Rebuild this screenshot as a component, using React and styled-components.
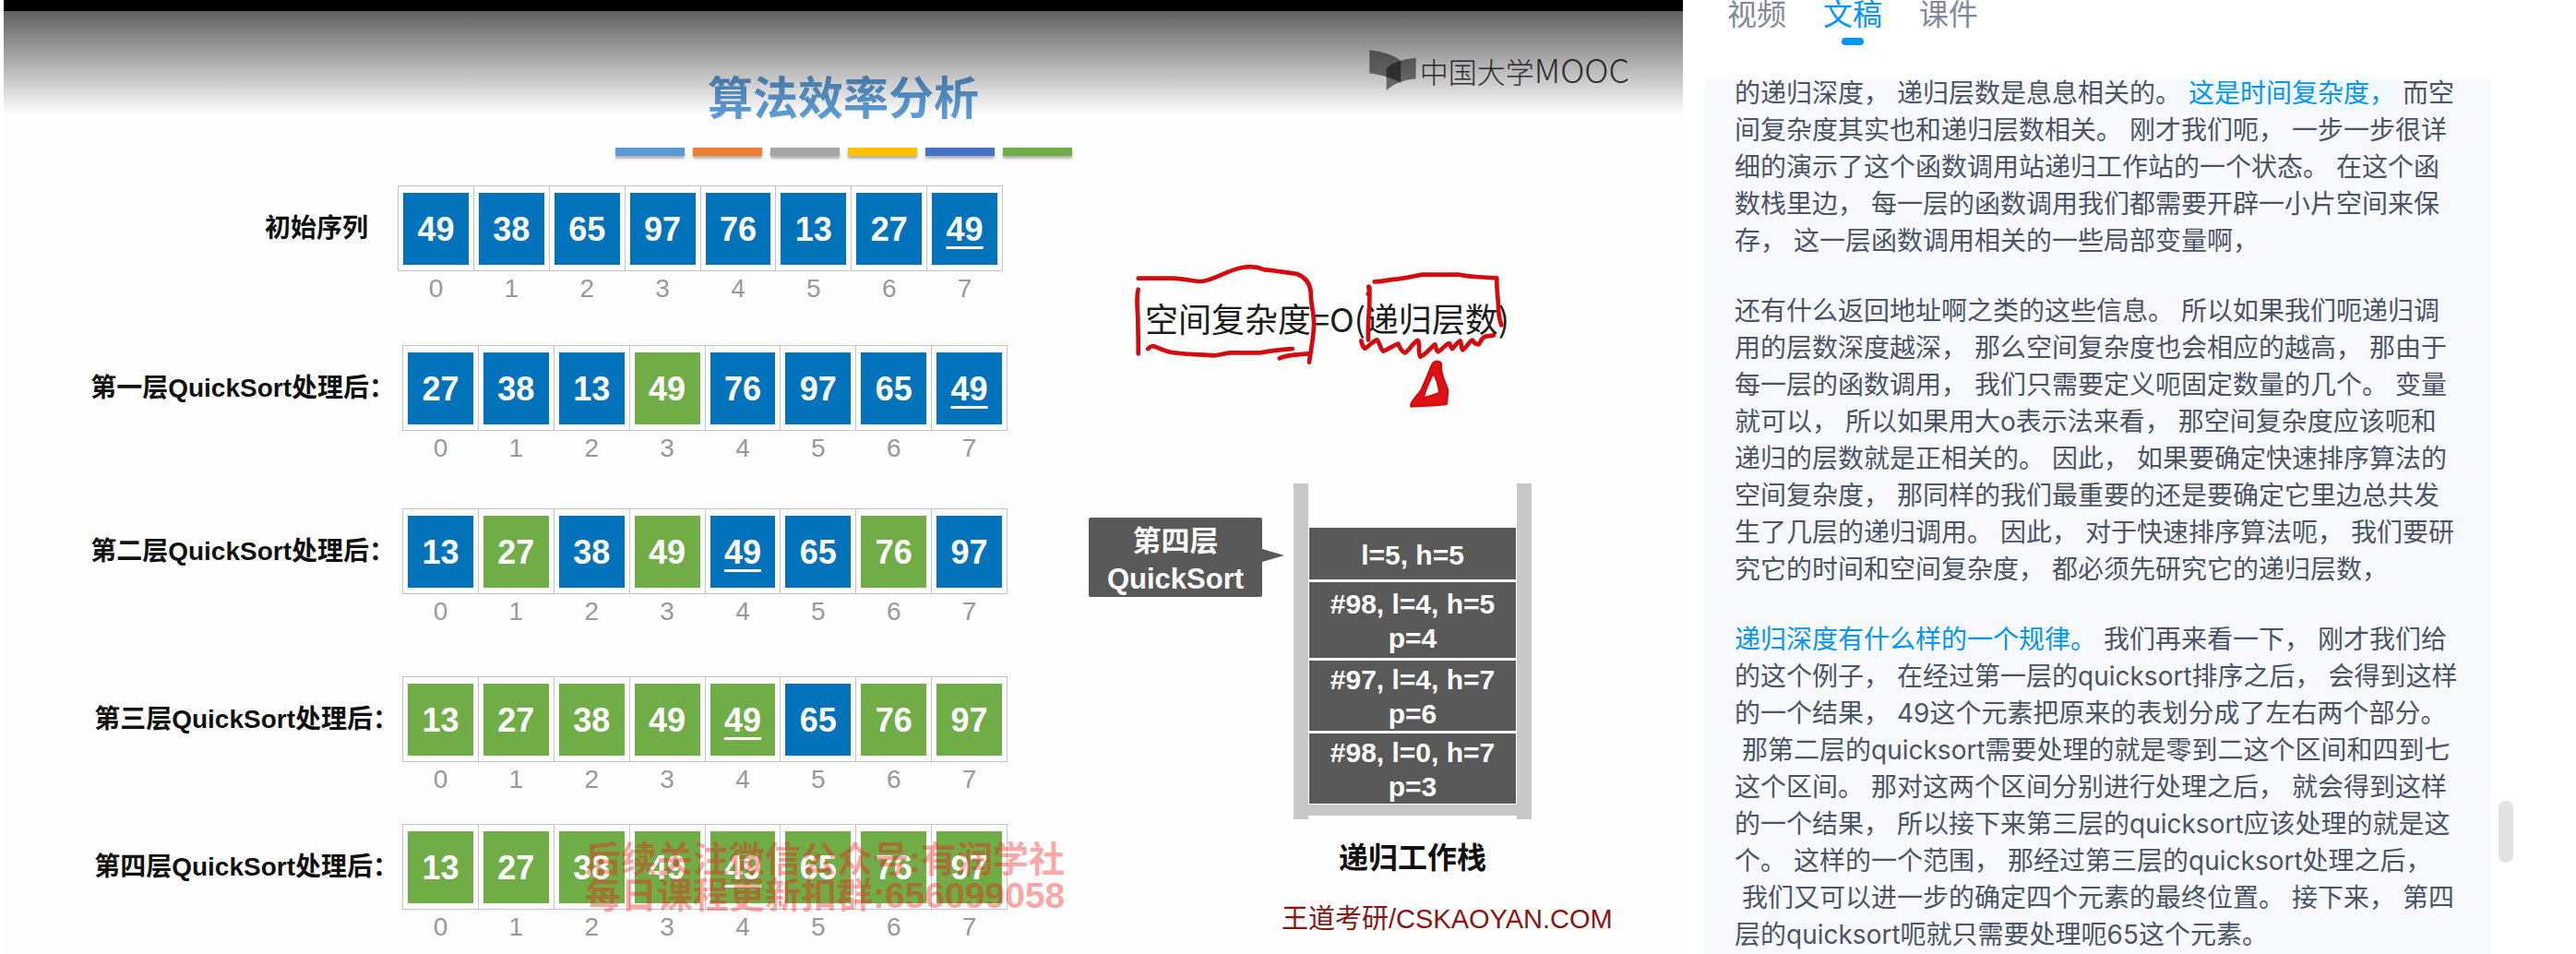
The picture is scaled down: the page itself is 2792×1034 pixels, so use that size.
import React from "react";
import styled, { createGlobalStyle } from "styled-components";

const cjk = '"Noto Sans CJK SC", sans-serif';
const slideFont = `"Liberation Sans", ${cjk}`;

const GlobalStyle = createGlobalStyle`
  *, *::before, *::after { box-sizing: border-box; }
  body { margin: 0; background: #fff; }
`;

const Page = styled.main`
  display: grid;
  grid-template-columns: 1820fr 968fr;
  height: 100vh;
  padding-left: 4px;
  overflow: hidden;
  font-family: ${slideFont};
`;

/* ---------- video slide ---------- */

const Slide = styled.section`
  position: relative;
  border-top: 12px solid #000;
  background: #fefefe;
  overflow: hidden;
`;

const Shade = styled.div`
  position: absolute;
  inset: 0 0 auto;
  height: 113px;
  background: linear-gradient(rgba(0, 0, 0, 0.62), rgba(0, 0, 0, 0));
  pointer-events: none;
`;

const SlideHeader = styled.header`
  display: grid;
  grid-template-columns: 1fr auto 1fr;
  height: 148px;
  padding: 42px 58px 0;
`;

const Title = styled.h1`
  grid-column: 2;
  margin: 14px 0 0;
  font: 700 49px/70px ${cjk};
  color: #5b9bd5;
`;

const Brand = styled.div`
  display: flex;
  align-items: flex-start;
  justify-content: flex-end;
  gap: 4px;
  font: 300 31px/40px ${cjk};
  color: #3c3c3c;
`;

const BrandLatin = styled.span`
  font-size: 36px;
`;

const Stripes = styled.div`
  display: flex;
  justify-content: center;
  gap: 9px;
`;

const Stripe = styled.i`
  width: 75px;
  height: 9px;
  background: ${(p) => p.$color};
  box-shadow: 0 3px 3px rgba(0, 0, 0, 0.3);
`;

const SlideBody = styled.div`
  display: flex;
  padding-top: 32px;
`;

const Steps = styled.div`
  flex: none;
  width: 1160px;
`;

const Step = styled.div`
  display: flex;
  margin-bottom: ${(p) => p.$after}px;
`;

const StepLabel = styled.div`
  width: ${(p) => (p.$first ? 427 : 432)}px;
  padding-right: ${(p) => p.$inset}px;
  text-align: right;
  font-size: 28px;
  line-height: 94px;
  font-weight: 700;
  color: #111;
`;

const ArrayTable = styled.table`
  table-layout: fixed;
  width: 656px;
  border-collapse: collapse;
`;

const Cell = styled.td`
  height: 92px;
  padding: 0 5px;
  border: 1px solid #c4c4c8;
`;

const Block = styled.span`
  display: block;
  height: 78px;
  background: ${(p) => (p.$done ? "#70ad47" : "#0272bb")};
  color: #fff;
  font-size: 36px;
  line-height: 80px;
  font-weight: 700;
  text-align: center;
  text-decoration: ${(p) => (p.$marked ? "underline 3px" : "none")};
  text-underline-offset: 6px;
`;

const Index = styled.td`
  height: 35px;
  padding: 3px 0 0;
  font-size: 28px;
  line-height: 32px;
  text-align: center;
  color: #999;
`;

const Notes = styled.div`
  flex: 1;
  min-width: 0;
`;

const Formula = styled.div`
  position: relative;
  width: 480px;
  height: 200px;
  margin: 59px 0 0 36px;
  padding: 58px 0 0 41px;
  font: 400 36px/52px ${cjk};
  color: #1c1c1c;
  white-space: nowrap;
`;

const Ink = styled.svg`
  position: absolute;
  inset: 0;
  width: 100%;
  height: 100%;
  fill: none;
  stroke: #d40a0c;
  stroke-width: 14;
  stroke-linecap: round;
  stroke-linejoin: round;
`;

const StackArea = styled.div`
  display: flex;
  gap: 34px;
  margin: 64px 0 0 16px;
`;

const Callout = styled.div`
  position: relative;
  width: 188px;
  height: 86px;
  margin-top: 37px;
  padding-top: 5px;
  border-radius: 2px;
  background: #595959;
  color: #fff;
  font-size: 31px;
  line-height: 41px;
  font-weight: 700;
  text-align: center;

  &::after {
    content: "";
    position: absolute;
    left: 100%;
    top: 34px;
    border: solid transparent;
    border-width: 7px 0 7px 24px;
    border-left-color: #595959;
  }
`;

const StackColumn = styled.div`
  display: flex;
  flex-direction: column;
  align-items: center;
`;

const Stack = styled.div`
  display: flex;
  flex-direction: column;
  gap: 3px;
  width: 258px;
  height: 364px;
  padding: 48px 1px 4px;
  border: solid #c8c8c8;
  border-width: 0 16px;
`;

const Frame = styled.div`
  display: flex;
  align-items: center;
  justify-content: center;
  flex: ${(p) => p.$size} 1 0;
  padding-top: 2px;
  background: #595959;
  color: #fff;
  font-size: 30px;
  line-height: 37px;
  font-weight: 700;
  text-align: center;
  white-space: pre-line;
`;

const StackFloor = styled.div`
  height: 12px;
  margin: -2px -1px 0;
  background: #c8c8c8;
`;

const StackName = styled.div`
  margin-top: 15px;
  font: 700 32px/48px ${cjk};
  color: #111;
`;

const Credit = styled.div`
  margin: 24px 0 0 225px;
  font: 400 29px/42px ${slideFont};
  color: #8c1410;
`;

const Watermark = styled.p`
  position: absolute;
  left: 630px;
  top: 900px;
  margin: 0;
  font-size: 39px;
  line-height: 39px;
  font-weight: 700;
  color: rgba(250, 20, 20, 0.38);
  white-space: nowrap;
`;

/* ---------- transcript ---------- */

const Side = styled.aside`
  display: flex;
  flex-direction: column;
  min-height: 0;
  padding: 0 68px 0 24px;
  font-family: Inter, ${cjk};
`;

const Tabs = styled.nav`
  display: flex;
  flex: none;
  gap: 40px;
  height: 86px;
  padding-left: 24px;
`;

const Tab = styled.button`
  display: flex;
  flex-direction: column;
  align-items: center;
  padding: 0;
  border: 0;
  background: none;
  font: 400 32px/26px ${cjk};
  color: ${(p) => (p.$active ? "#0095ff" : "#808998")};

  &::after {
    content: "";
    width: 24px;
    height: 8px;
    margin-top: 15px;
    border-radius: 4px;
    background: ${(p) => (p.$active ? "#0095ff" : "transparent")};
  }
`;

const Scroller = styled.div`
  display: flex;
  flex: 1;
  gap: 8px;
  min-height: 0;
`;

const Transcript = styled.article`
  flex: 1;
  padding: 0 32px;
  background: #f8f9fd;
  overflow: hidden;
`;

const Scrolled = styled.div`
  margin-top: -5px;
`;

const Paragraph = styled.p`
  margin: 0 0 36px;
  font-size: 28px;
  line-height: 40px;
  color: #4a5468;
`;

const Clause = styled.span`
  padding: ${(p) => (p.$tone === "current" ? 3 : 0)}px 0;
  padding-left: 8px;
  color: ${(p) => (p.$tone ? "#0095ff" : "inherit")};
  background: ${(p) => (p.$tone === "current" ? "#f2faff" : "none")};

  &:first-child {
    padding-left: 0;
  }
`;

const Track = styled.div`
  display: flex;
  flex-direction: column;
  justify-content: flex-end;
  width: 16px;
  padding-bottom: 99px;
`;

const Thumb = styled.div`
  height: 67px;
  border-radius: 8px;
  background: #e2e2e2;
`;

/* ---------- data ---------- */

const stripes = ["#5b9bd5", "#ed7d31", "#a5a5a5", "#ffc000", "#4472c4", "#70ad47"];

const steps = [
  { label: "初始序列", inset: 32, after: 45, values: [49, 38, 65, 97, 76, 13, 27, 49], done: [], marked: 7 },
  { label: "第一层QuickSort处理后：", inset: 8, after: 49, values: [27, 38, 13, 49, 76, 97, 65, 49], done: [3], marked: 7 },
  { label: "第二层QuickSort处理后：", inset: 8, after: 54, values: [13, 27, 38, 49, 49, 65, 76, 97], done: [1, 3, 6], marked: 4 },
  { label: "第三层QuickSort处理后：", inset: 4, after: 32, values: [13, 27, 38, 49, 49, 65, 76, 97], done: [0, 1, 2, 3, 4, 6, 7], marked: 4 },
  { label: "第四层QuickSort处理后：", inset: 4, after: 0, values: [13, 27, 38, 49, 49, 65, 76, 97], done: [0, 1, 2, 3, 4, 5, 6, 7], marked: 4 },
];

const frames = [
  { text: "l=5, h=5", size: 56 },
  { text: "#98, l=4, h=5\np=4", size: 82 },
  { text: "#97, l=4, h=7\np=6", size: 76 },
  { text: "#98, l=0, h=7\np=3", size: 75 },
];

const tabs = ["视频", "文稿", "课件"];

const paragraphs = [
  [
    "的递归深度，",
    "递归层数是息息相关的。",
    { text: "这是时间复杂度，", tone: "current" },
    "而空间复杂度其实也和递归层数相关。",
    "刚才我们呃，",
    "一步一步很详细的演示了这个函数调用站递归工作站的一个状态。",
    "在这个函数栈里边，",
    "每一层的函数调用我们都需要开辟一小片空间来保存，",
    "这一层函数调用相关的一些局部变量啊，",
  ],
  [
    "还有什么返回地址啊之类的这些信息。",
    "所以如果我们呃递归调用的层数深度越深，",
    "那么空间复杂度也会相应的越高，",
    "那由于每一层的函数调用，",
    "我们只需要定义呃固定数量的几个。",
    "变量就可以，",
    "所以如果用大o表示法来看，",
    "那空间复杂度应该呃和递归的层数就是正相关的。",
    "因此，",
    "如果要确定快速排序算法的空间复杂度，",
    "那同样的我们最重要的还是要确定它里边总共发生了几层的递归调用。",
    "因此，",
    "对于快速排序算法呃，",
    "我们要研究它的时间和空间复杂度，",
    "都必须先研究它的递归层数，",
  ],
  [
    { text: "递归深度有什么样的一个规律。", tone: "marked" },
    "我们再来看一下，",
    "刚才我们给的这个例子，",
    "在经过第一层的quicksort排序之后，",
    "会得到这样的一个结果，",
    "49这个元素把原来的表划分成了左右两个部分。",
    "那第二层的quicksort需要处理的就是零到二这个区间和四到七这个区间。",
    "那对这两个区间分别进行处理之后，",
    "就会得到这样的一个结果，",
    "所以接下来第三层的quicksort应该处理的就是这个。",
    "这样的一个范围，",
    "那经过第三层的quicksort处理之后，",
    "我们又可以进一步的确定四个元素的最终位置。",
    "接下来，",
    "第四层的quicksort呃就只需要处理呃65这个元素。",
  ],
];

function BrandMark() {
  return (
    <svg width="51" height="44" viewBox="0 0 153 132" aria-hidden="true">
      <path d="M1 1 C45 6 78 16 103 36 V108 C75 92 40 82 1 76 Z" fill="#000" fillOpacity="0.5" />
      <path d="M56 132 V60 C78 42 108 30 152 26 V94 C112 98 84 108 56 132 Z" fill="#000" fillOpacity="0.5" />
    </svg>
  );
}

function InkMarks() {
  return (
    <Ink viewBox="0 0 1440 600" aria-hidden="true">
      <path d="M101 125 H215 C260 127 280 135 305 135 C345 132 390 98 440 90 C470 84 490 88 512 97 C550 100 585 106 618 111 C645 122 660 142 662 170 C662 215 674 240 672 280 C670 325 662 360 657 398" />
      <path d="M101 161 C94 190 98 220 100 250 C100 300 102 330 101 370" />
      <path d="M133 354 C140 344 152 344 160 349 C180 358 195 366 220 367 C250 373 290 371 350 376 C370 374 380 369 400 367 H500 C535 360 570 357 602 354" />
      <path d="M560 385 C585 374 610 374 656 370" />
      <path d="M850 152 C852 165 854 172 848 176 M853 155 C856 215 846 260 849 325" />
      <path d="M869 136 C900 136 915 128 945 127 C980 124 1000 116 1025 113 H1145 C1180 121 1210 120 1267 124 C1265 160 1272 190 1272 220 C1273 245 1276 262 1282 277" />
      <path d="M826 328 C828 340 832 348 838 353 C855 345 862 328 878 325 C888 335 885 352 898 362 C915 356 930 342 946 338 C952 350 955 362 968 367 C985 358 992 335 1010 327 C1020 340 1008 362 1018 380 C1040 370 1050 350 1066 340 C1072 350 1066 358 1076 364 C1090 356 1100 340 1112 336 C1118 342 1116 350 1122 354 C1130 346 1138 332 1148 328 C1154 338 1148 348 1156 358 C1170 350 1174 332 1188 326 C1192 334 1200 340 1208 340 C1218 330 1215 318 1230 314 C1242 312 1250 312 1257 310" />
      <path
        d="M1058 402 C1065 392 1080 392 1086 402 C1082 440 1104 470 1108 490 L1104 534 C1070 540 1030 538 988 542 C984 530 1005 510 1020 490 C1035 460 1045 430 1058 402 Z M1060 434 C1048 462 1034 485 1029 514 C1048 509 1065 503 1080 497 C1078 475 1074 456 1060 434 Z"
        fill="#dd1214"
        fillRule="evenodd"
        strokeWidth="6"
      />
    </Ink>
  );
}

function SortStep({ step, first }) {
  return (
    <Step $after={step.after}>
      <StepLabel $first={first} $inset={step.inset}>
        {step.label}
      </StepLabel>
      <ArrayTable aria-label={step.label}>
        <tbody>
          <tr>
            {step.values.map((value, i) => (
              <Cell key={i}>
                <Block $done={step.done.includes(i)} $marked={step.marked === i}>
                  {value}
                </Block>
              </Cell>
            ))}
          </tr>
          <tr>
            {step.values.map((_, i) => (
              <Index key={i}>{i}</Index>
            ))}
          </tr>
        </tbody>
      </ArrayTable>
    </Step>
  );
}

export default function App() {
  return (
    <Page>
      <GlobalStyle />
      <Slide>
        <SlideHeader>
          <Title>算法效率分析</Title>
          <Brand>
            <BrandMark />
            <span>
              中国大学<BrandLatin>MOOC</BrandLatin>
            </span>
          </Brand>
        </SlideHeader>
        <Stripes>
          {stripes.map((color) => (
            <Stripe key={color} $color={color} />
          ))}
        </Stripes>
        <SlideBody>
          <Steps>
            {steps.map((step, i) => (
              <SortStep key={step.label} step={step} first={i === 0} />
            ))}
          </Steps>
          <Notes>
            <Formula>
              空间复杂度=O(递归层数)
              <InkMarks />
            </Formula>
            <StackArea>
              <Callout>
                第四层
                <br />
                QuickSort
              </Callout>
              <StackColumn>
                <Stack>
                  {frames.map((frame) => (
                    <Frame key={frame.text} $size={frame.size}>
                      {frame.text}
                    </Frame>
                  ))}
                  <StackFloor />
                </Stack>
                <StackName>递归工作栈</StackName>
              </StackColumn>
            </StackArea>
            <Credit>王道考研/CSKAOYAN.COM</Credit>
          </Notes>
        </SlideBody>
        <Watermark>
          后续关注微信公众号:有润学社
          <br />
          每日课程更新扣群:656099058
        </Watermark>
        <Shade />
      </Slide>
      <Side>
        <Tabs>
          {tabs.map((tab) => (
            <Tab key={tab} type="button" $active={tab === "文稿"}>
              {tab}
            </Tab>
          ))}
        </Tabs>
        <Scroller>
          <Transcript>
            <Scrolled>
              {paragraphs.map((clauses, i) => (
                <Paragraph key={i}>
                  {clauses.map((clause, j) => (
                    <Clause key={j} $tone={clause.tone}>
                      {clause.text || clause}
                    </Clause>
                  ))}
                </Paragraph>
              ))}
            </Scrolled>
          </Transcript>
          <Track>
            <Thumb />
          </Track>
        </Scroller>
      </Side>
    </Page>
  );
}
